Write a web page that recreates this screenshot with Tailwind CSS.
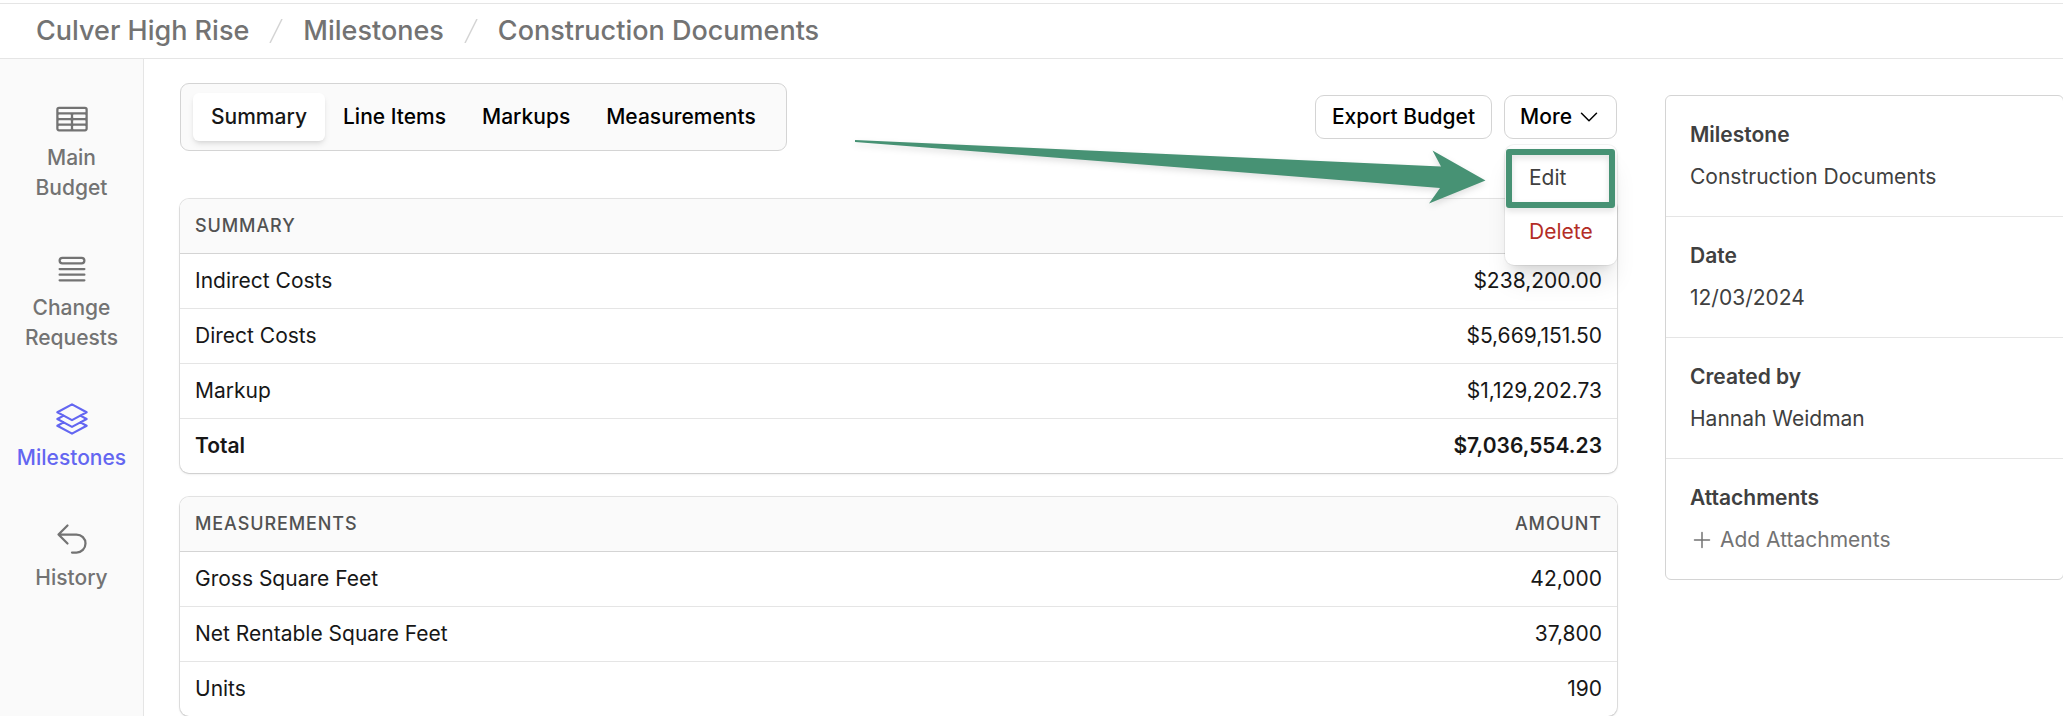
<!DOCTYPE html>
<html lang="en">
<head>
    <meta charset="UTF-8">
    <meta name="viewport" content="width=device-width, initial-scale=1.0">
    <title>Construction Documents</title>
    <script src="https://cdn.jsdelivr.net/npm/@tailwindcss/browser@4"></script>
</head>
<body class="flex flex-col min-h-screen overflow-x-hidden bg-white font-['Inter',sans-serif] text-[21px] leading-[30px] text-neutral-900">

    <!-- Breadcrumbs -->
    <header class="mt-[3px] border-y border-neutral-200">
        <nav class="flex items-center gap-[19px] h-[54px] px-9 text-[27px] font-medium text-neutral-500" aria-label="Breadcrumb">
            <a href="#">Culver High Rise</a>
            <svg class="w-4 h-6 text-neutral-300" viewBox="0 0 16 24" fill="none" stroke="currentColor" stroke-width="1.5"><path d="M2 24 14 0"/></svg>
            <a href="#">Milestones</a>
            <svg class="w-4 h-6 text-neutral-300" viewBox="0 0 16 24" fill="none" stroke="currentColor" stroke-width="1.5"><path d="M2 24 14 0"/></svg>
            <a href="#">Construction Documents</a>
        </nav>
    </header>

    <div class="flex flex-1">
        <!-- Sidebar -->
        <nav class="flex flex-col gap-12 w-36 shrink-0 pt-[42px] border-r border-neutral-200 bg-neutral-50 font-medium text-center text-neutral-500" aria-label="Budget">
            <a href="#" class="flex flex-col items-center gap-[6px] px-4">
                <svg class="size-9" viewBox="0 0 24 24" fill="none" stroke="currentColor" stroke-width="1.5" stroke-linecap="round" stroke-linejoin="round"><path d="M3.375 19.5h17.25m-17.25 0a1.125 1.125 0 01-1.125-1.125M3.375 19.5h7.5c.621 0 1.125-.504 1.125-1.125m-9.75 0V5.625m0 12.75v-1.5c0-.621.504-1.125 1.125-1.125m18.375 2.625V5.625m0 12.75c0 .621-.504 1.125-1.125 1.125m1.125-1.125v-1.5c0-.621-.504-1.125-1.125-1.125m0 3.75h-7.5A1.125 1.125 0 0112 18.375m9.75-12.75c0-.621-.504-1.125-1.125-1.125H3.375c-.621 0-1.125.504-1.125 1.125m19.5 0v1.5c0 .621-.504 1.125-1.125 1.125M2.25 5.625v1.5c0 .621.504 1.125 1.125 1.125m0 0h17.25m-17.25 0h7.5c.621 0 1.125.504 1.125 1.125M3.375 8.25c-.621 0-1.125.504-1.125 1.125v1.5c0 .621.504 1.125 1.125 1.125m17.25-3.75h-7.5c-.621 0-1.125.504-1.125 1.125m8.625-1.125c.621 0 1.125.504 1.125 1.125v1.5c0 .621-.504 1.125-1.125 1.125m-17.25 0h7.5m-7.5 0c-.621 0-1.125.504-1.125 1.125v1.5c0 .621.504 1.125 1.125 1.125M12 10.875v-1.5m0 1.5c0 .621-.504 1.125-1.125 1.125M12 10.875c0 .621.504 1.125 1.125 1.125m-2.25 0c.621 0 1.125.504 1.125 1.125M13.125 12h7.5m-7.5 0c-.621 0-1.125.504-1.125 1.125M20.625 12c.621 0 1.125.504 1.125 1.125v1.5c0 .621-.504 1.125-1.125 1.125m-17.25 0h7.5M12 14.625v-1.5m0 1.5c0 .621-.504 1.125-1.125 1.125M12 14.625c0 .621.504 1.125 1.125 1.125m-2.25 0c.621 0 1.125.504 1.125 1.125m0 1.5v-1.5m0 0c0-.621.504-1.125 1.125-1.125m0 0h7.5"/></svg>
                Main Budget
            </a>
            <a href="#" class="flex flex-col items-center gap-[6px] px-4">
                <svg class="size-9" viewBox="0 0 24 24" fill="none" stroke="currentColor" stroke-width="1.5" stroke-linecap="round" stroke-linejoin="round"><path d="M3.75 12h16.5m-16.5 3.75h16.5M3.75 19.5h16.5M5.625 4.5h12.75a1.875 1.875 0 010 3.75H5.625a1.875 1.875 0 010-3.75z"/></svg>
                Change Requests
            </a>
            <a href="#" class="flex flex-col items-center gap-[6px] px-4 text-[#6366f1]" aria-current="page">
                <svg class="size-9" viewBox="0 0 24 24" fill="none" stroke="currentColor" stroke-width="1.5" stroke-linecap="round" stroke-linejoin="round"><path d="M6.429 9.75L2.25 12l4.179 2.25m0-4.5l5.571 3 5.571-3m-11.142 0L2.25 7.5 12 2.25l9.75 5.25-4.179 2.25m0 0L21.75 12l-4.179 2.25m0 0l4.179 2.25L12 21.75 2.25 16.5l4.179-2.25m11.142 0l-5.571 3-5.571-3"/></svg>
                Milestones
            </a>
            <a href="#" class="flex flex-col items-center gap-[6px] px-4">
                <svg class="size-9" viewBox="0 0 24 24" fill="none" stroke="currentColor" stroke-width="1.5" stroke-linecap="round" stroke-linejoin="round"><path d="M9 15L3 9m0 0l6-6M3 9h12a6 6 0 010 12h-3"/></svg>
                History
            </a>
        </nav>

        <div class="flex flex-1 gap-12 pl-9">
            <main class="flex-1 pt-6">
                <!-- Tabs and actions -->
                <div class="relative flex items-center justify-between">
                    <div class="flex px-3 py-[9px] border border-neutral-300 rounded-[9px] bg-neutral-50 font-medium text-black" role="tablist">
                        <button class="px-[18px] py-[9px] rounded-md bg-white shadow-md text-neutral-900" role="tab" aria-selected="true">Summary</button>
                        <button class="px-[18px] py-[9px]" role="tab">Line Items</button>
                        <button class="px-[18px] py-[9px]" role="tab">Markups</button>
                        <button class="px-[18px] py-[9px]" role="tab">Measurements</button>
                    </div>

                    <div class="flex gap-3 font-medium text-black">
                        <button class="px-4 py-[6px] border border-neutral-300 rounded-[9px] bg-white">Export Budget</button>
                        <div class="relative">
                            <button class="flex items-center gap-[5px] px-[15px] py-[6px] border border-neutral-300 rounded-[9px] bg-white" aria-haspopup="menu" aria-expanded="true">
                                More
                                <svg class="size-6" viewBox="0 0 24 24" fill="none" stroke="currentColor" stroke-width="1.5" stroke-linecap="round" stroke-linejoin="round"><path d="M19.5 8.25l-7.5 7.5-7.5-7.5"/></svg>
                            </button>
                            <div class="absolute z-10 right-0 top-full w-28 mt-[6px] py-[6px] rounded-[9px] bg-white shadow-xl ring-1 ring-black/5 font-normal" role="menu">
                                <button class="block w-full px-6 py-3 text-left text-neutral-700" role="menuitem">Edit</button>
                                <button class="block w-full px-6 py-3 text-left text-[#b32d26]" role="menuitem">Delete</button>
                                <span class="absolute left-px right-[2px] top-1 h-[59px] border-6 border-[#479274] rounded-[3px] drop-shadow-md pointer-events-none"></span>
                            </div>
                        </div>
                    </div>

                    <!-- Callout arrow -->
                    <svg class="absolute z-10 right-[131px] top-[55px] w-[631px] h-[68px] overflow-visible drop-shadow-md pointer-events-none" viewBox="0 0 631 68" fill="#479274"><path d="M0 2 586 28.500 577.500 12.500 630.500 42.500 574 65.500 585 50 0 4z"/></svg>
                </div>

                <table class="w-full mt-12 rounded-[9px] overflow-hidden shadow-sm ring-1 ring-black/10">
                    <thead class="bg-neutral-50 text-lg leading-[30px] tracking-wider uppercase text-neutral-600">
                        <tr class="border-b border-neutral-300">
                            <th class="px-[15px] py-3 font-medium text-left">Summary</th>
                            <th></th>
                        </tr>
                    </thead>
                    <tbody class="divide-y divide-neutral-200">
                        <tr>
                            <td class="px-[15px] py-3">Indirect Costs</td>
                            <td class="px-[15px] py-3 text-right">$238,200.00</td>
                        </tr>
                        <tr>
                            <td class="px-[15px] py-3">Direct Costs</td>
                            <td class="px-[15px] py-3 text-right">$5,669,151.50</td>
                        </tr>
                        <tr>
                            <td class="px-[15px] py-3">Markup</td>
                            <td class="px-[15px] py-3 text-right">$1,129,202.73</td>
                        </tr>
                        <tr class="font-semibold">
                            <td class="px-[15px] py-3">Total</td>
                            <td class="px-[15px] py-3 text-right">$7,036,554.23</td>
                        </tr>
                    </tbody>
                </table>

                <table class="w-full mt-6 rounded-[9px] overflow-hidden shadow-sm ring-1 ring-black/10">
                    <thead class="bg-neutral-50 text-lg leading-[30px] tracking-wider uppercase text-neutral-600">
                        <tr class="border-b border-neutral-300">
                            <th class="px-[15px] py-3 font-medium text-left">Measurements</th>
                            <th class="px-[15px] py-3 font-medium text-right">Amount</th>
                        </tr>
                    </thead>
                    <tbody class="divide-y divide-neutral-200">
                        <tr>
                            <td class="px-[15px] py-3">Gross Square Feet</td>
                            <td class="px-[15px] py-3 text-right">42,000</td>
                        </tr>
                        <tr>
                            <td class="px-[15px] py-3">Net Rentable Square Feet</td>
                            <td class="px-[15px] py-3 text-right">37,800</td>
                        </tr>
                        <tr>
                            <td class="px-[15px] py-3">Units</td>
                            <td class="px-[15px] py-3 text-right">190</td>
                        </tr>
                    </tbody>
                </table>
            </main>

            <!-- Details -->
            <aside class="w-[399px] shrink-0 -mr-px pt-9 text-neutral-700">
                <dl class="border border-neutral-300 rounded-md divide-y divide-neutral-200">
                    <div class="flex flex-col gap-3 p-6">
                        <dt class="font-semibold">Milestone</dt>
                        <dd>Construction Documents</dd>
                    </div>
                    <div class="flex flex-col gap-3 p-6">
                        <dt class="font-semibold">Date</dt>
                        <dd>12/03/2024</dd>
                    </div>
                    <div class="flex flex-col gap-3 p-6">
                        <dt class="font-semibold">Created by</dt>
                        <dd>Hannah Weidman</dd>
                    </div>
                    <div class="flex flex-col gap-3 p-6">
                        <dt class="font-semibold">Attachments</dt>
                        <dd>
                            <button class="flex items-center gap-[6px] text-neutral-500">
                                <svg class="size-6" viewBox="0 0 24 24" fill="none" stroke="currentColor" stroke-width="1.5" stroke-linecap="round" stroke-linejoin="round"><path d="M12 4.500v15m7.500-7.500h-15"/></svg>
                                Add Attachments
                            </button>
                        </dd>
                    </div>
                </dl>
            </aside>
        </div>
    </div>

</body>
</html>
